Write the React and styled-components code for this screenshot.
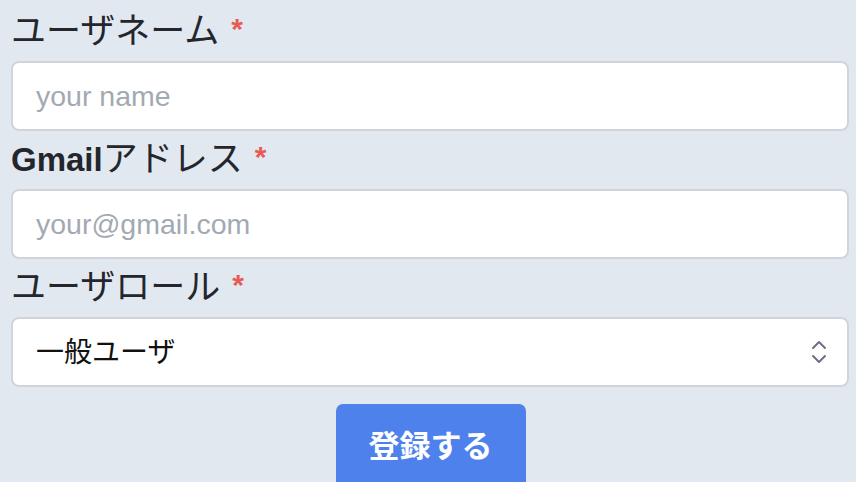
import React, { useState } from 'react'
import styled, { createGlobalStyle } from 'styled-components'

const GlobalStyle = createGlobalStyle`
  html, body {
    margin: 0;
    padding: 0;
    background: #e2e8f0;
    overflow: hidden;
  }
  body {
    font-family: "Liberation Sans", "Noto Sans CJK JP", sans-serif;
  }
`

const Form = styled.form`
  display: flex;
  flex-direction: column;
  padding: 11px 7px 0 11px;
  gap: 8px;
`
const Field = styled.div`
  display: flex;
  flex-direction: column;
`
const Label = styled.label`
  height: 40px;
  line-height: 40px;
  margin-bottom: 10px;
  font-size: 35px;
  color: #23272d;
  white-space: nowrap;
`
const Latin = styled.span`
  font-weight: 700;
  font-size: 33px;
`
const Required = styled.span`
  color: #e85a55;
  font-weight: 700;
  font-size: 30px;
  margin-left: 12px;
  position: relative;
  top: -4px;
`
const Input = styled.input`
  box-sizing: border-box;
  height: 70px;
  width: 100%;
  border: 2px solid #d1d5db;
  border-radius: 8px;
  background: #fff;
  padding: 0 23px;
  font-size: 28.5px;
  font-family: inherit;
  color: #111;
  outline: none;

  &::placeholder {
    color: #a3a9b3;
  }
`
const SelectWrap = styled.div`
  position: relative;
`
const Select = styled.select`
  appearance: none;
  box-sizing: border-box;
  height: 70px;
  width: 100%;
  border: 2px solid #d1d5db;
  border-radius: 8px;
  background: #fff;
  padding: 0 23px;
  font-size: 28px;
  font-family: inherit;
  color: #111;
  outline: none;
`
const Chevrons = styled.svg`
  position: absolute;
  right: 22px;
  top: 50%;
  transform: translateY(-50%);
  pointer-events: none;
`
const Actions = styled.div`
  display: flex;
  justify-content: center;
  margin-top: 9px;
`
const Button = styled.button`
  height: 84px;
  padding: 0 33px 6px;
  border: none;
  border-radius: 7px;
  background: #4f81ec;
  color: #fff;
  font-family: inherit;
  font-size: 31px;
  font-weight: 700;
  cursor: pointer;
  margin-left: 1px;
`

const App = () => {
  const [role, setRole] = useState('general')

  return (
    <>
      <GlobalStyle />
      <Form onSubmit={(e) => e.preventDefault()}>
        <Field>
          <Label>ユーザネーム<Required>*</Required></Label>
          <Input type="text" placeholder="your name" />
        </Field>
        <Field>
          <Label><Latin>Gmail</Latin>アドレス<Required>*</Required></Label>
          <Input type="email" placeholder="your@gmail.com" />
        </Field>
        <Field>
          <Label>ユーザロール<Required>*</Required></Label>
          <SelectWrap>
            <Select value={role} onChange={(e) => setRole(e.target.value)}>
              <option value="general">一般ユーザ</option>
              <option value="admin">管理者</option>
            </Select>
            <Chevrons width="16" height="24" viewBox="0 0 16 24" fill="none" stroke="#6b7280" strokeWidth="2" strokeLinecap="round" strokeLinejoin="round">
              <path d="M2 8l6-6 6 6" />
              <path d="M2 16l6 6 6-6" />
            </Chevrons>
          </SelectWrap>
        </Field>
        <Actions>
          <Button type="submit">登録する</Button>
        </Actions>
      </Form>
    </>
  )
}

export default App
